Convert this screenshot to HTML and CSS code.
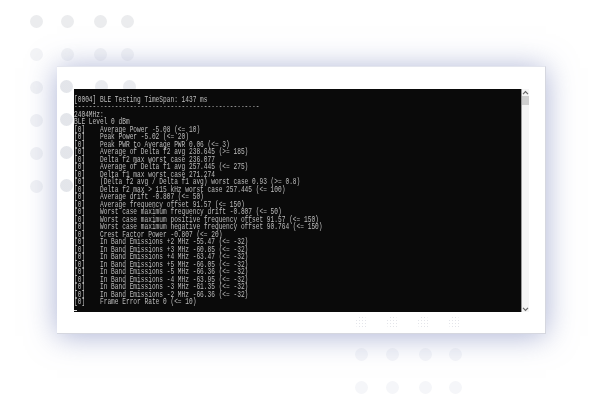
FILE: index.html
```html
<!DOCTYPE html>
<html lang="en">
<head>
<meta charset="utf-8">
<title>BLE Testing</title>
<link rel="stylesheet" href="styles.css">
</head>
<body>
<main class="stage">
  <div class="dots dots-tl"><i></i><i></i><i></i><i></i><i></i><i></i><i></i><i></i><i></i><i></i><i></i><i></i><i></i><i></i><i></i><i></i><i></i><i></i><i></i><i></i><i></i><i></i><i></i><i></i></div>
  <div class="dots dots-br"><i></i><i></i><i></i><i></i><i></i><i></i><i></i><i></i></div>
  <section class="card">
    <div class="console">
      <pre class="terminal">[0004] BLE Testing TimeSpan: 1437 ms
--------------------------------------------------
2404MHz:
BLE Level 0 dBm
[0]    Average Power -5.08 (&lt;= 10)
[0]    Peak Power -5.02 (&lt;= 20)
[0]    Peak PWR to Average PWR 0.06 (&lt;= 3)
[0]    Average of Delta f2 avg 238.645 (&gt;= 185)
[0]    Delta f2 max worst case 236.077
[0]    Average of Delta f1 avg 257.445 (&lt;= 275)
[0]    Delta f1 max worst case 271.274
[0]    (Delta f2 avg / Delta f1 avg) worst case 0.93 (&gt;= 0.8)
[0]    Delta f2 max &gt; 115 kHz worst case 257.445 (&lt;= 100)
[0]    Average drift -0.807 (&lt;= 50)
[0]    Average frequency offset 91.57 (&lt;= 150)
[0]    Worst case maximum frequency drift -0.807 (&lt;= 50)
[0]    Worst case maximum positive frequency offset 91.57 (&lt;= 150)
[0]    Worst case maximum negative frequency offset 90.764 (&lt;= 150)
[0]    Crest Factor Power -0.807 (&lt;= 20)
[0]    In Band Emissions +2 MHz -55.47 (&lt;= -32)
[0]    In Band Emissions +3 MHz -60.85 (&lt;= -32)
[0]    In Band Emissions +4 MHz -63.47 (&lt;= -32)
[0]    In Band Emissions +5 MHz -66.05 (&lt;= -32)
[0]    In Band Emissions -5 MHz -66.36 (&lt;= -32)
[0]    In Band Emissions -4 MHz -63.95 (&lt;= -32)
[0]    In Band Emissions -3 MHz -61.35 (&lt;= -32)
[0]    In Band Emissions -2 MHz -66.36 (&lt;= -32)
[0]    Frame Error Rate 0 (&lt;= 10)</pre>
      <span class="cursor"></span>
    </div>
    <div class="scrollbar">
      <svg class="arrow" viewBox="0 0 8 6" width="8" height="6"><path d="M1 5 4 2l3 3" fill="none" stroke="#666" stroke-width="1.4"/></svg>
      <div class="thumb"></div>
      <svg class="arrow" viewBox="0 0 8 6" width="8" height="6"><path d="M1 1l3 3 3-3" fill="none" stroke="#666" stroke-width="1.4"/></svg>
    </div>
  </section>
  <div class="dots dots-over-left"><i></i><i></i><i></i><i></i></div>
  <div class="dots dots-over-top"><i></i><i></i></div>
  <div class="dots dots-over-bottom"><i></i><i></i><i></i><i></i></div>
</main>
</body>
</html>
```
FILE: styles.css
```css
* { box-sizing: border-box; }
html, body { margin: 0; background: #fff; }
.stage {
  position: relative;
  width: 600px;
  height: 406px;
  overflow: hidden;
  padding: 66px 54px 72px 57px;
}
.dots { position: absolute; display: grid; }
.dots i { width: 13px; height: 13px; border-radius: 50%; background: #ebecee; }
.dots-tl {
  left: 30px; top: 15px;
  grid-template-columns: 13px 13px 13px 13px;
  grid-auto-rows: 13px;
  column-gap: 18px;
  row-gap: 20px;
}
.dots-tl i:nth-child(4n+4) { transform: translateX(-2px); }
.dots-tl i:nth-child(4n+3) { transform: translateX(2px); }
.dots-tl i:nth-child(n+5):nth-child(-n+8) { background: #f3f4f6; }
.dots-tl i:nth-child(4n+1):nth-child(n+9) { background: #f1f2f5; }
.dots-br {
  left: 355px; top: 348px;
  grid-template-columns: 13px 13px 13px 13px;
  grid-auto-rows: 13px;
  column-gap: 18px;
  row-gap: 20px;
}
.dots-br i { background: #f5f6f9; }
.dots-br i:nth-child(4n+3) { transform: translateX(2px); }
.dots-br i:nth-child(4n+4) { transform: translateX(1px); }
.card {
  position: relative;
  width: 489px;
  height: 268px;
  background: #fff;
  border-right: 1px solid #d5d7df;
  border-bottom: 1px solid #d5d7df;
  border-top: 1px solid #e4e6ee;
  box-shadow: 0 2px 28px rgba(120, 130, 185, 0.62);
  padding: 22px 16px 21px 17px;
  display: flex;
}
.console {
  position: relative;
  width: 448px;
  background: #0a0a0a;
  overflow: hidden;
  padding-top: 7.5px;
}
.terminal {
  margin: 0;
  width: 620px;
  font-family: "Liberation Mono", monospace;
  font-size: 8.4px;
  line-height: 7.5px;
  color: #bdbdbd;
  transform: scaleX(0.738);
  transform-origin: left top;
  filter: blur(0.3px);
}
.cursor {
  position: absolute;
  left: 0; bottom: 1px;
  width: 3px; height: 1px;
  background: #ddd;
}
.scrollbar {
  width: 8px;
  background: #f5f5f5;
  border-left: 1px solid #9a9a9a;
  display: flex;
  flex-direction: column;
  align-items: center;
}
.scrollbar .arrow { flex: none; margin-top: 1px; width: 7px; height: 5px; }
.thumb { width: 7px; height: 9px; margin-top: 1px; margin-bottom: auto; background: #cfcfcf; }
.dots-over-left {
  left: 60px; top: 80px;
  grid-template-columns: 13px;
  row-gap: 20px;
}
.dots-over-left i { background: radial-gradient(circle, #e3e5ea 0.7px, transparent 1px) 0 0 / 2px 2px; }
.dots-over-top {
  left: 95px; top: 80px;
  grid-template-columns: 13px 13px;
  column-gap: 15px;
  height: 9px;
  overflow: hidden;
}
.dots-over-top i { background: radial-gradient(circle, #e3e5ea 0.6px, transparent 1px) 0 0 / 2px 2px; }
.dots-over-bottom {
  left: 355px; top: 316px;
  grid-template-columns: 13px 13px 13px 13px;
  column-gap: 18px;
}
.dots-over-bottom i { background: radial-gradient(circle, #e4e5ea 0.5px, transparent 0.9px) 0 0 / 3px 3px; }
```
